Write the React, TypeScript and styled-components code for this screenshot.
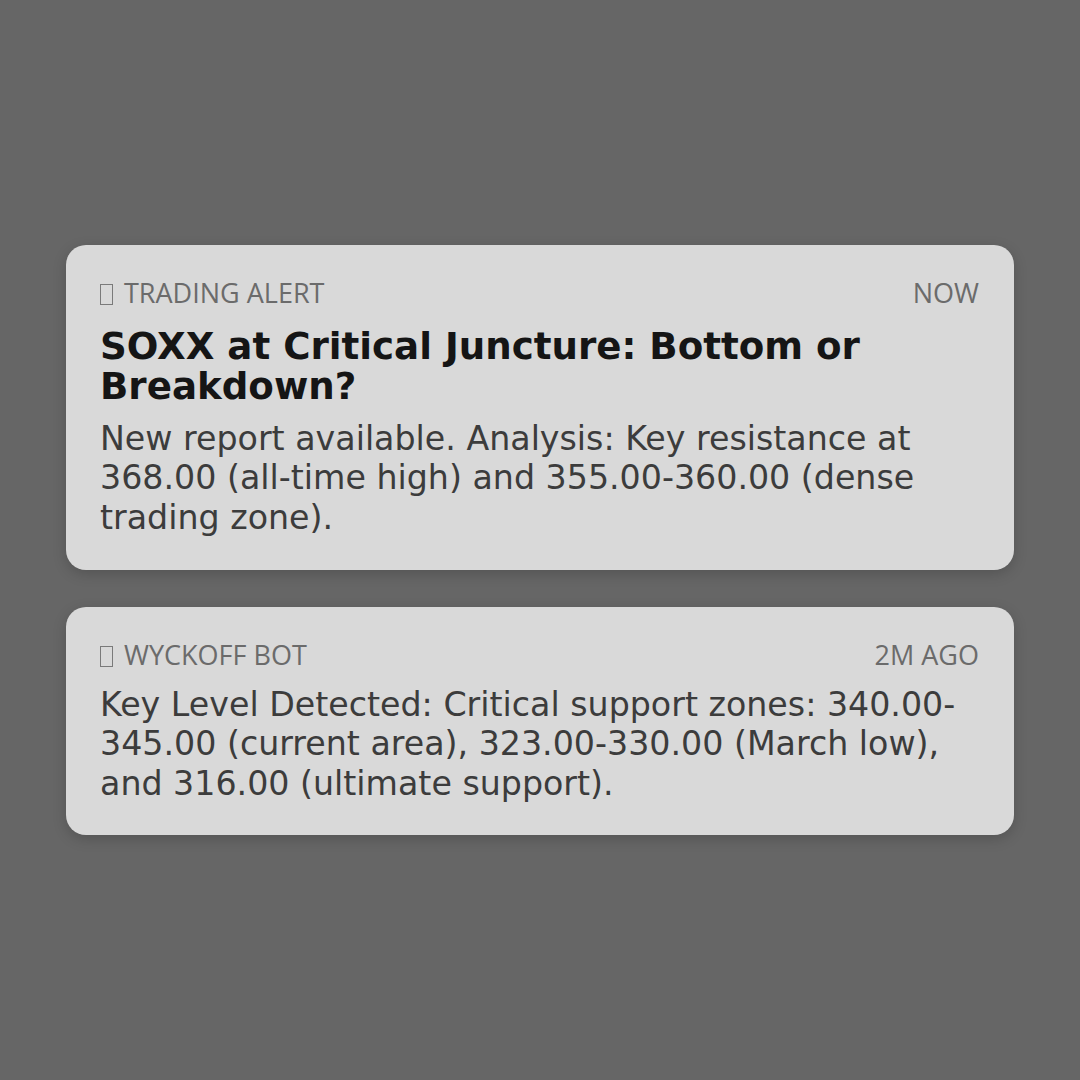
import styled, { createGlobalStyle } from "styled-components";

const GlobalStyle = createGlobalStyle`
    html, body {
        margin: 0;
        padding: 0;
        background: #666666;
    }
    * {
        box-sizing: border-box;
    }
`;

const Page = styled.div`
    width: 1080px;
    height: 1080px;
    display: flex;
    align-items: center;
    justify-content: center;
    background: #666666;
`;

const Stack = styled.div`
    width: 948px;
    display: flex;
    flex-direction: column;
    gap: 37px;
`;

const Card = styled.div`
    background: #d9d9d9;
    border-radius: 20px;
    padding: 30px 35px 32px 34px;
    box-shadow: 0 4px 14px rgba(0, 0, 0, 0.18);
    display: flex;
    flex-direction: column;
`;

const Header = styled.div`
    display: flex;
    justify-content: space-between;
    align-items: center;
    margin-bottom: 12px;
    font-family: "Open Sans", "DejaVu Sans", sans-serif;
    font-size: 27px;
    line-height: 36px;
    color: #6b6b6b;
    text-transform: uppercase;
`;

const Source = styled.span`
    display: flex;
    align-items: center;
    gap: 11px;
`;

// the app icon shows up as an empty "missing glyph" box
const Glyph = styled.span`
    display: inline-block;
    width: 13px;
    height: 21px;
    border: 1.5px solid #7a7a7a;
    margin-top: 3px;
`;

const Title = styled.h2`
    margin: 3px 0 13px;
    font-family: "DejaVu Sans", sans-serif;
    font-weight: 700;
    font-size: 37.2px;
    line-height: 40px;
    color: #151515;
`;

const Body = styled.p`
    margin: 0;
    font-family: "DejaVu Sans", sans-serif;
    font-size: 33.25px;
    line-height: 39.6px;
    color: #3c3c3c;
`;

interface INotice {
    id: string;
    source: string;
    time: string;
    title?: string;
    text: string;
}

const notices: INotice[] = [
    {
        id: "alert",
        source: "Trading Alert",
        time: "Now",
        title: "SOXX at Critical Juncture: Bottom or Breakdown?",
        text: "New report available. Analysis: Key resistance at 368.00 (all-time high) and 355.00-360.00 (dense trading zone).",
    },
    {
        id: "bot",
        source: "Wyckoff Bot",
        time: "2m ago",
        text: "Key Level Detected: Critical support zones: 340.00-345.00 (current area), 323.00-330.00 (March low), and 316.00 (ultimate support).",
    },
];

function App() {
    return (
        <>
            <GlobalStyle />
            <Page>
                <Stack>
                    {notices.map((n) => (
                        <Card key={n.id}>
                            <Header>
                                <Source>
                                    <Glyph aria-hidden="true" />
                                    {n.source}
                                </Source>
                                <span>{n.time}</span>
                            </Header>
                            {n.title && <Title>{n.title}</Title>}
                            <Body>{n.text}</Body>
                        </Card>
                    ))}
                </Stack>
            </Page>
        </>
    );
}

export default App;
